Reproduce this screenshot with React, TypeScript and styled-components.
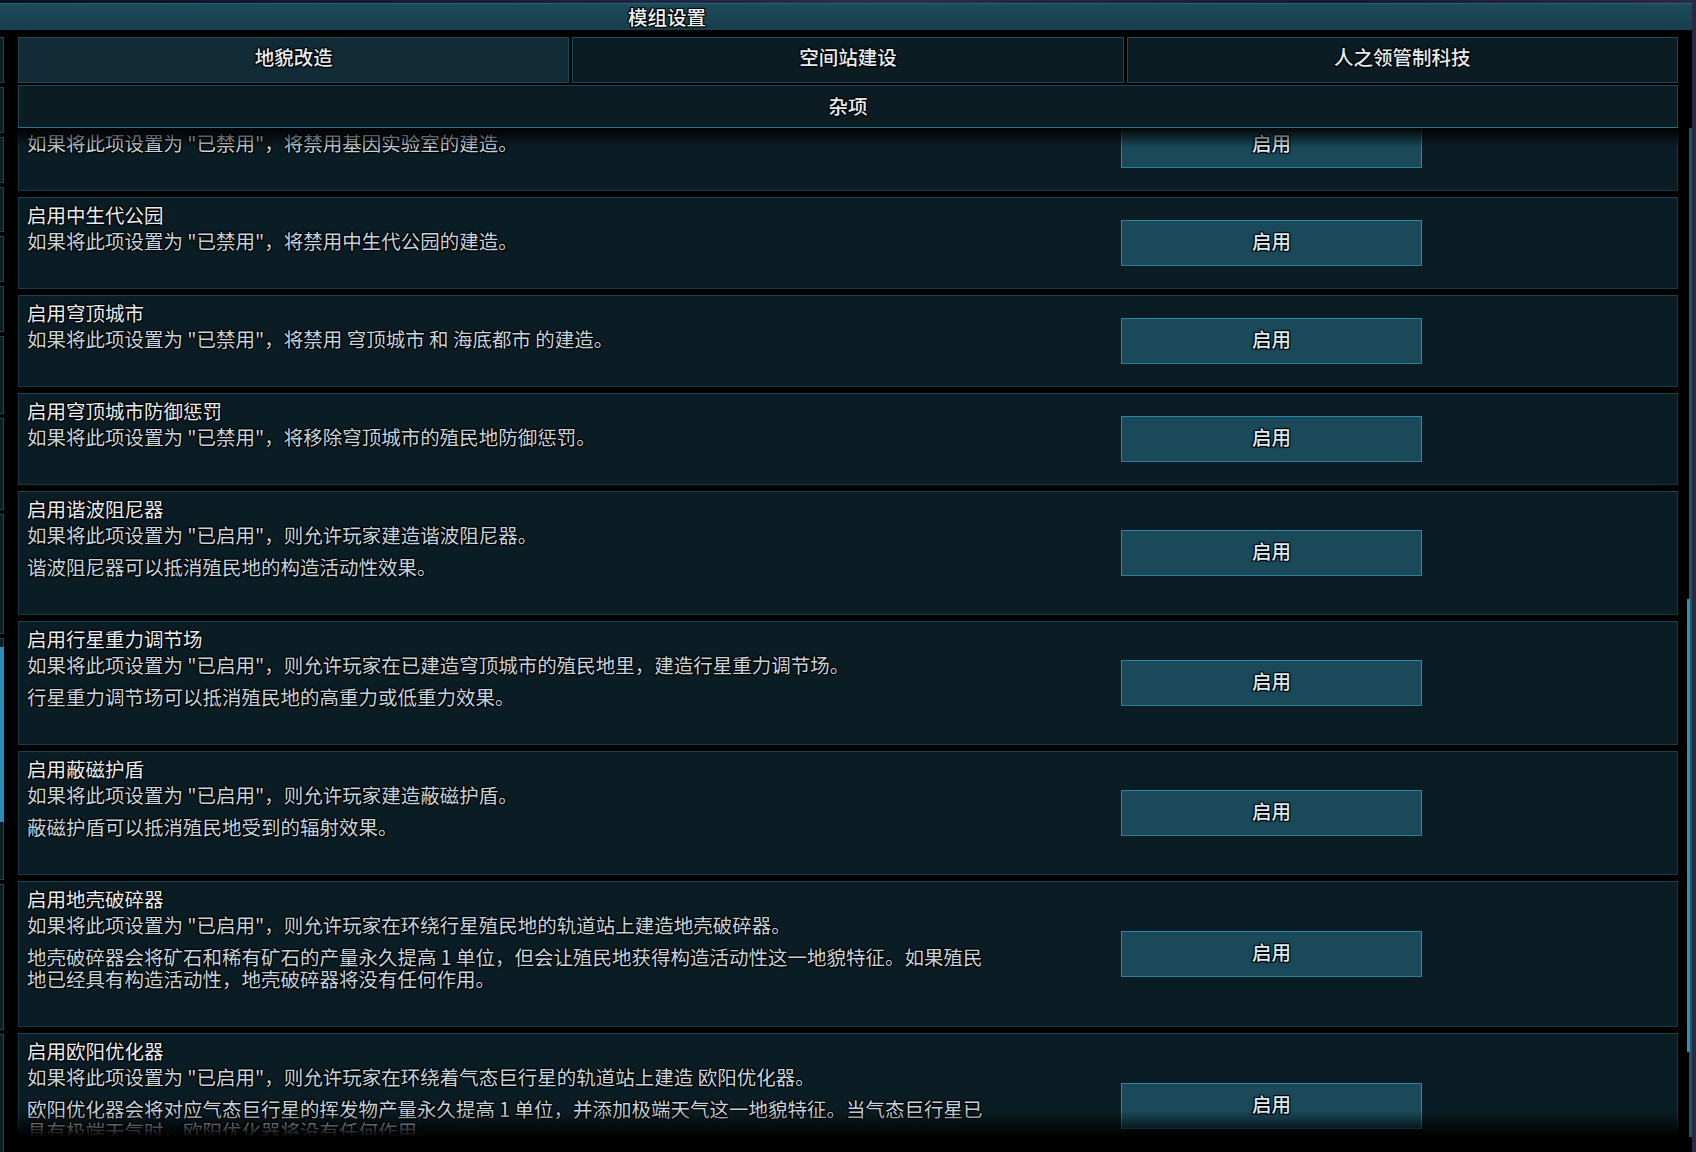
import React from 'react'
import styled, { createGlobalStyle } from 'styled-components'

type Setting = {
  title: string
  paragraphs: string[]
}

const settings: Setting[] = [
  {
    title: '启用基因实验室',
    paragraphs: ['如果将此项设置为 "已禁用"，将禁用基因实验室的建造。'],
  },
  {
    title: '启用中生代公园',
    paragraphs: ['如果将此项设置为 "已禁用"，将禁用中生代公园的建造。'],
  },
  {
    title: '启用穹顶城市',
    paragraphs: ['如果将此项设置为 "已禁用"，将禁用 穹顶城市 和 海底都市 的建造。'],
  },
  {
    title: '启用穹顶城市防御惩罚',
    paragraphs: ['如果将此项设置为 "已禁用"，将移除穹顶城市的殖民地防御惩罚。'],
  },
  {
    title: '启用谐波阻尼器',
    paragraphs: [
      '如果将此项设置为 "已启用"，则允许玩家建造谐波阻尼器。',
      '谐波阻尼器可以抵消殖民地的构造活动性效果。',
    ],
  },
  {
    title: '启用行星重力调节场',
    paragraphs: [
      '如果将此项设置为 "已启用"，则允许玩家在已建造穹顶城市的殖民地里，建造行星重力调节场。',
      '行星重力调节场可以抵消殖民地的高重力或低重力效果。',
    ],
  },
  {
    title: '启用蔽磁护盾',
    paragraphs: [
      '如果将此项设置为 "已启用"，则允许玩家建造蔽磁护盾。',
      '蔽磁护盾可以抵消殖民地受到的辐射效果。',
    ],
  },
  {
    title: '启用地壳破碎器',
    paragraphs: [
      '如果将此项设置为 "已启用"，则允许玩家在环绕行星殖民地的轨道站上建造地壳破碎器。',
      '地壳破碎器会将矿石和稀有矿石的产量永久提高 1 单位，但会让殖民地获得构造活动性这一地貌特征。如果殖民\n地已经具有构造活动性，地壳破碎器将没有任何作用。',
    ],
  },
  {
    title: '启用欧阳优化器',
    paragraphs: [
      '如果将此项设置为 "已启用"，则允许玩家在环绕着气态巨行星的轨道站上建造 欧阳优化器。',
      '欧阳优化器会将对应气态巨行星的挥发物产量永久提高 1 单位，并添加极端天气这一地貌特征。当气态巨行星已\n具有极端天气时，欧阳优化器将没有任何作用。',
    ],
  },
]

const tabs = ['地貌改造', '空间站建设', '人之领管制科技']

const stripBoxes = [46, 46, 46, 45, 46, 46, 78, 92, 120, 120, 118, 146, 120]

// scroll position of the list, in px
const listScroll = { viewport: 1009, thumbTop: 471, thumbHeight: 453 }

const outline =
  '-1px -1px 0 #000, 1px -1px 0 #000, -1px 1px 0 #000, 1px 1px 0 #000, 0 0 3px #000'

const App = () => {
  return (
    <Page>
      <GlobalStyle />
      <Window>
        <TitleBar>模组设置</TitleBar>
        <WindowBody>
          <LeftStrip>
            {stripBoxes.map((h, i) => (
              <StripBox key={i} $h={h} />
            ))}
            <StripThumb />
          </LeftStrip>
          <Main>
            <TabRow>
              {tabs.map((t, i) => (
                <Tab key={t} $active={i === 0}>
                  {t}
                </Tab>
              ))}
            </TabRow>
            <SubTab>杂项</SubTab>
            <ListViewport>
              <List>
                {settings.map((s) => (
                  <Card key={s.title}>
                    <TextBlock>
                      <CardTitle>{s.title}</CardTitle>
                      {s.paragraphs.map((p, i) => (
                        <Desc key={i} $first={i === 0}>
                          {p}
                        </Desc>
                      ))}
                    </TextBlock>
                    <ToggleButton>启用</ToggleButton>
                  </Card>
                ))}
              </List>
              <TopFade />
              <BottomFade />
            </ListViewport>
          </Main>
          <Rail>
            <RailThumb
              style={{ top: listScroll.thumbTop, height: listScroll.thumbHeight }}
            />
          </Rail>
        </WindowBody>
      </Window>
    </Page>
  )
}

const GlobalStyle = createGlobalStyle`
  html, body {
    margin: 0;
    padding: 0;
    background: #151c2f;
  }
  body {
    font-family: "Noto Sans CJK SC", "Noto Sans", sans-serif;
  }
`

const Page = styled('div')({
  width: '1696px',
  height: '1152px',
  paddingTop: '3px',
  boxSizing: 'border-box',
  overflow: 'hidden',
  background:
    'linear-gradient(90deg, #0b1120 0%, #172038 30%, #2a2f4c 52%, #141b2e 78%, #2b2a45 100%)',
})

const Window = styled('div')({
  width: '1692px',
  height: '1149px',
  background: '#000',
  display: 'flex',
  flexDirection: 'column',
})

const TitleBar = styled('div')({
  height: '27px',
  flex: 'none',
  boxSizing: 'border-box',
  borderTop: '1px solid #2a6272',
  background: 'linear-gradient(180deg, #1d4b5a 0%, #173f4d 100%)',
  display: 'flex',
  alignItems: 'center',
  paddingLeft: '628px',
  paddingBottom: '2px',
  color: '#eef4f6',
  fontSize: '19.5px',
  fontWeight: 500,
  textShadow: outline,
})

const WindowBody = styled('div')({
  flex: 1,
  minHeight: 0,
  display: 'flex',
})

const LeftStrip = styled('div')({
  width: '4px',
  flex: 'none',
  paddingTop: '7px',
  display: 'flex',
  flexDirection: 'column',
  gap: '4px',
  position: 'relative',
  overflow: 'hidden',
})

const StripBox = styled('div')<{ $h: number }>(({ $h }) => ({
  height: `${$h}px`,
  flex: 'none',
  boxSizing: 'border-box',
  background: '#0c1f27',
  border: '1px solid #1d4756',
  borderLeft: 'none',
}))

const StripThumb = styled('div')({
  position: 'absolute',
  left: 0,
  top: '617px',
  width: '4px',
  height: '175px',
  background: '#2e8db0',
})

const Main = styled('div')({
  width: '1660px',
  flex: 'none',
  marginLeft: '14px',
  display: 'flex',
  flexDirection: 'column',
  paddingTop: '7px',
  paddingBottom: '15px',
  boxSizing: 'border-box',
})

const TabRow = styled('div')({
  display: 'grid',
  gridTemplateColumns: '1fr 1fr 1fr',
  columnGap: '3px',
  height: '46px',
  flex: 'none',
})

const Tab = styled('div')<{ $active: boolean }>(({ $active }) => ({
  display: 'flex',
  alignItems: 'center',
  justifyContent: 'center',
  paddingBottom: '8px',
  boxSizing: 'border-box',
  background: $active ? '#112c36' : '#0c1c23',
  border: '1px solid #1f4856',
  color: '#e3edf1',
  fontSize: '19.5px',
  fontWeight: 500,
  textShadow: outline,
}))

const SubTab = styled('div')({
  height: '43px',
  flex: 'none',
  marginTop: '2px',
  paddingBottom: '3px',
  boxSizing: 'border-box',
  display: 'flex',
  alignItems: 'center',
  justifyContent: 'center',
  background: '#0c1c23',
  border: '1px solid #1f4856',
  borderBottomColor: '#2c7489',
  color: '#e3edf1',
  fontSize: '19.5px',
  fontWeight: 500,
  textShadow: outline,
})

const ListViewport = styled('div')({
  flex: 1,
  minHeight: 0,
  position: 'relative',
  overflow: 'hidden',
})

const List = styled('div')({
  display: 'flex',
  flexDirection: 'column',
  gap: '6px',
  marginTop: '-29px',
})

const Card = styled('div')({
  display: 'flex',
  alignItems: 'center',
  background: '#0b1d24',
  border: '1px solid #173a46',
  borderTopColor: '#1b4452',
})

const TextBlock = styled('div')({
  width: '1102px',
  flex: 'none',
  boxSizing: 'border-box',
  padding: '6px 0 36px 8px',
})

const CardTitle = styled('div')({
  fontSize: '19.5px',
  lineHeight: '22px',
  fontWeight: 400,
  color: '#e6eef1',
  textShadow: outline,
})

const Desc = styled('p')<{ $first: boolean }>(({ $first }) => ({
  margin: `${$first ? 4 : 10}px 0 0`,
  fontSize: '19.5px',
  lineHeight: '22px',
  color: '#c0d4dd',
  whiteSpace: 'pre-line',
  textShadow: outline,
}))

const ToggleButton = styled('button')({
  width: '301px',
  height: '46px',
  flex: 'none',
  padding: '0 0 5px',
  boxSizing: 'border-box',
  background: '#1a4a5a',
  border: '1px solid #2a88a6',
  borderBottomColor: '#2a7f9b',
  color: '#d9ecf3',
  fontFamily: 'inherit',
  fontSize: '19.5px',
  fontWeight: 500,
  textShadow: outline,
  cursor: 'pointer',
})

const TopFade = styled('div')({
  position: 'absolute',
  top: 0,
  left: 0,
  right: 0,
  height: '20px',
  pointerEvents: 'none',
  background: 'linear-gradient(180deg, rgba(0,0,0,0.92) 0%, rgba(0,0,0,0) 100%)',
})

const BottomFade = styled('div')({
  position: 'absolute',
  bottom: 0,
  left: 0,
  right: 0,
  height: '26px',
  pointerEvents: 'none',
  background: 'linear-gradient(180deg, rgba(0,0,0,0) 0%, #000 100%)',
})

const Rail = styled('div')({
  width: '5px',
  flex: 'none',
  marginLeft: '9px',
  marginTop: '98px',
  marginBottom: '15px',
  position: 'relative',
  background: 'linear-gradient(90deg, transparent 2px, #1d5467 2px)',
})

const RailThumb = styled('div')({
  position: 'absolute',
  left: 0,
  width: '3px',
  background: '#2f90b4',
})

export default App
